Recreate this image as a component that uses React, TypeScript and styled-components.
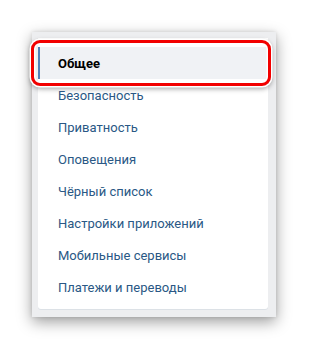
import React from 'react';
import styled, { createGlobalStyle } from 'styled-components';

const GlobalStyle = createGlobalStyle`
  body {
    margin: 0;
    background: #ffffff;
    font-family: Roboto, "Open Sans", "Liberation Sans", sans-serif;
  }
`;

const Page = styled.div`
  width: 309px;
  height: 349px;
  padding: 32px 0 0 32px;
  box-sizing: border-box;
`;

const Panel = styled.div`
  width: 244px;
  padding: 6px 8px 8px 6px;
  box-sizing: border-box;
  background: #edeef0;
  box-shadow: 0 5px 14px rgba(0, 0, 0, 0.38), 0 0 4px rgba(0, 0, 0, 0.12);
`;

const Card = styled.ul`
  list-style: none;
  margin: 0;
  padding: 9px 0 6px;
  background: #ffffff;
  border-radius: 0 0 3px 3px;
  box-shadow: 0 1px 0 #dce1e6;
`;

const Item = styled.li<{ $active?: boolean }>`
  position: relative;
  height: 32px;
  display: flex;
  align-items: center;
  padding-left: ${p => (p.$active ? '18px' : '20px')};
  border-left: ${p => (p.$active ? '2px solid #5181b8' : 'none')};
  background: ${p => (p.$active ? '#f0f2f5' : 'transparent')};
  font-size: 13px;
  font-weight: ${p => (p.$active ? 700 : 400)};
  color: ${p => (p.$active ? '#000000' : '#2a5885')};
  white-space: nowrap;
`;

const Highlight = styled.span`
  position: absolute;
  top: -7px;
  bottom: -7px;
  left: -9px;
  right: -3px;
  border: 3px solid #f20000;
  border-radius: 9px;
  box-shadow: 0 0 0 1.5px #ffffff, inset 0 0 0 1.5px #ffffff,
    0 2px 5px 1px rgba(0, 0, 0, 0.35);
  pointer-events: none;
`;

const items = [
  'Общее',
  'Безопасность',
  'Приватность',
  'Оповещения',
  'Чёрный список',
  'Настройки приложений',
  'Мобильные сервисы',
  'Платежи и переводы',
];

export default function App() {
  return (
    <>
      <GlobalStyle />
      <Page>
        <Panel>
          <Card>
            {items.map((label, i) => (
              <Item key={label} $active={i === 0}>
                {label}
                {i === 0 && <Highlight />}
              </Item>
            ))}
          </Card>
        </Panel>
      </Page>
    </>
  );
}
